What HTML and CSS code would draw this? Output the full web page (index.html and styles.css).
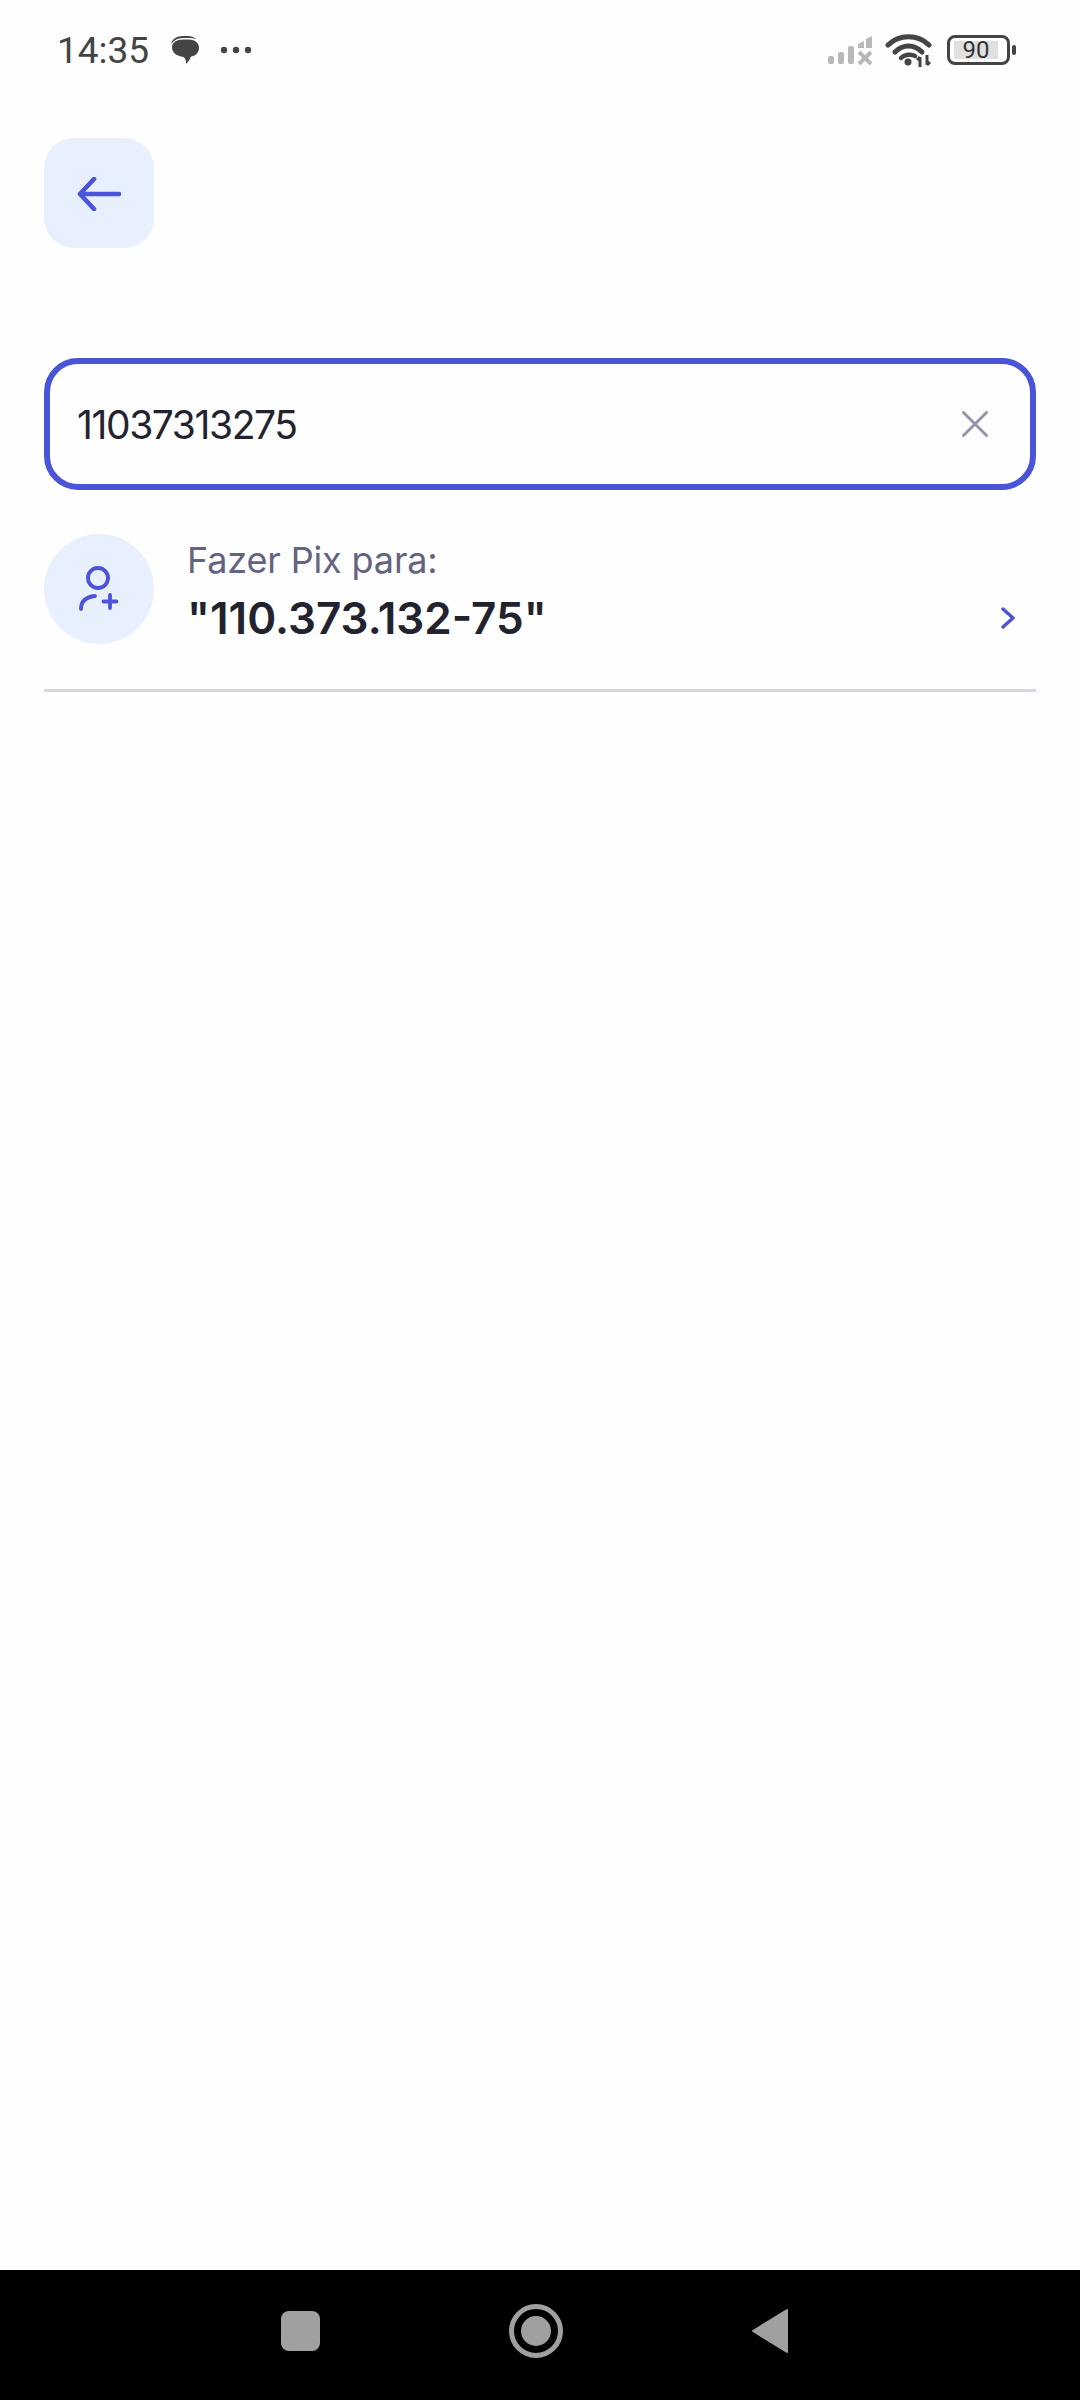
FILE: index.html
```html
<!DOCTYPE html>
<html lang="pt-BR">
<head>
  <meta charset="UTF-8" />
  <meta name="viewport" content="width=device-width, initial-scale=1" />
  <title>Fazer Pix</title>
  <link rel="stylesheet" href="styles.css">
</head>
<body>
  <header class="status-bar">
    <div class="status-left">
      <span class="clock">14:35</span>
      <svg class="chat-icon" width="30" height="30" viewBox="0 0 30 30">
        <path d="M1 9 C2 4 7 1 13 1 H18 C21 1 24 2 26 4 C24 3.500 21 3 18 3 H13 C8 3 4 5 1 9 Z" fill="#444"/>
        <path d="M2 12 C2 7.500 7 4.500 13 4.500 H19 C25 4.500 29 8 29 13 C29 18 25 21 21 21.500 C20 24 18.500 27 16 29 C16.300 26 15.500 23.500 13.500 22 C7 21 2 18 2 12 Z" fill="#444"/>
      </svg>
      <svg class="dots-icon" width="32" height="8" viewBox="0 0 32 8">
        <circle cx="4" cy="4" r="3.200" fill="#444"/>
        <circle cx="16" cy="4" r="3.200" fill="#444"/>
        <circle cx="28" cy="4" r="3.200" fill="#444"/>
      </svg>
    </div>
    <div class="status-right">
      <svg width="46" height="30" viewBox="0 0 46 30">
        <rect x="1" y="21" width="6" height="8" rx="2" fill="#b8b8b8"/>
        <rect x="11" y="17" width="6" height="12" rx="2" fill="#b8b8b8"/>
        <rect x="21" y="11" width="6" height="18" rx="2" fill="#b8b8b8"/>
        <path d="M31 9 L37 6 V13 H31 Z" fill="#b8b8b8"/>
        <path d="M39 4 L45 1 V13 H39 Z" fill="#b8b8b8"/>
        <path d="M32 17 L44 29 M44 17 L32 29" stroke="#b8b8b8" stroke-width="4"/>
      </svg>
      <svg class="wifi-icon" width="48" height="34" viewBox="0 0 48 34">
        <path d="M3 12 C14 1 33 1 44 12" fill="none" stroke="#444" stroke-width="5" stroke-linecap="round"/>
        <path d="M10 19 C18 11 29 11 37 19" fill="none" stroke="#444" stroke-width="5" stroke-linecap="round"/>
        <path d="M16 25 C20 21 27 21 30 23" fill="none" stroke="#444" stroke-width="4.500" stroke-linecap="round"/>
        <circle cx="23" cy="29" r="3.500" fill="#444"/>
        <path d="M35 34 V24 M35 24 L32 27 M42 22 V32 M42 32 L45 29" fill="none" stroke="#444" stroke-width="3"/>
      </svg>
      <div class="battery">
        <div class="battery-body">
          <span class="battery-level">90</span>
        </div>
        <div class="battery-cap"></div>
      </div>
    </div>
  </header>

  <main class="content">
    <button class="back-btn" type="button" aria-label="Voltar">
      <svg class="back-icon" width="44" height="34" viewBox="0 0 44 34">
        <path d="M42 17 H3 M17 2 L3 17 L17 32" fill="none" stroke="#4a54d8" stroke-width="4.600" stroke-linecap="round" stroke-linejoin="round"/>
      </svg>
    </button>

    <div class="search-box">
      <span class="search-value">11037313275</span>
      <svg class="clear-icon" width="26" height="26" viewBox="0 0 26 26">
        <path d="M1.500 1.500 L24.500 24.500 M24.500 1.500 L1.500 24.500" stroke="#9494aa" stroke-width="3" stroke-linecap="round"/>
      </svg>
    </div>

    <div class="result-row">
      <div class="avatar">
        <svg class="person-icon" width="44" height="48" viewBox="0 0 44 48">
          <circle cx="20" cy="13" r="10" fill="none" stroke="#4a54d8" stroke-width="3.800"/>
          <path d="M3 44 C3 36 8 32 17 31" fill="none" stroke="#4a54d8" stroke-width="3.800" stroke-linecap="round"/>
          <path d="M32 30 V43 M25.500 36.500 H38.500" fill="none" stroke="#4a54d8" stroke-width="3.800" stroke-linecap="round"/>
        </svg>
      </div>
      <div class="result-text">
        <div class="result-label">Fazer Pix para:</div>
        <div class="result-line">
          <span class="result-value">"110.373.132-75"</span>
          <svg class="chevron" width="14" height="22" viewBox="0 0 14 22">
            <path d="M2 2 L12 11 L2 20" fill="none" stroke="#4a54d8" stroke-width="3.400" stroke-linecap="round" stroke-linejoin="round"/>
          </svg>
        </div>
      </div>
    </div>
  </main>

  <footer class="nav-bar">
    <div class="nav-square"></div>
    <div class="nav-home"><div class="nav-home-dot"></div></div>
    <svg width="38" height="46" viewBox="0 0 38 46">
      <path d="M36 2 V44 L2 23 Z" fill="#a0a0a0" stroke="#a0a0a0" stroke-width="2" stroke-linejoin="round"/>
    </svg>
  </footer>
</body>
</html>
```

FILE: styles.css
```css
* {
  box-sizing: border-box;
}
body {
  margin: 0;
  width: 1080px;
  height: 2400px;
  display: flex;
  flex-direction: column;
  background: #fefefe;
  font-family: Inter, "Noto Sans", sans-serif;
}
.status-bar {
  height: 100px;
  padding: 0 64px 0 57px;
  display: flex;
  justify-content: space-between;
  align-items: center;
}
.status-left {
  display: flex;
  align-items: center;
}
.clock {
  font-family: Roboto, sans-serif;
  font-size: 37px;
  color: #444;
}
.chat-icon {
  margin-left: 21px;
}
.dots-icon {
  margin-left: 20px;
}
.status-right {
  display: flex;
  align-items: center;
}
.wifi-icon {
  margin-left: 12px;
}
.battery {
  margin-left: 14px;
  display: flex;
  align-items: center;
  gap: 2px;
}
.battery-body {
  width: 63px;
  height: 30px;
  padding: 3px 9px 3px 4px;
  border: 3px solid #444;
  border-radius: 8px;
  display: flex;
}
.battery-level {
  flex: 1;
  background: #e0e0e0;
  font-family: Roboto, sans-serif;
  font-size: 24px;
  line-height: 18px;
  text-align: center;
  color: #333;
}
.battery-cap {
  width: 4px;
  height: 10px;
  background: #444;
  border-radius: 2px;
}
.content {
  flex: 1;
  padding: 38px 44px 0;
}
.back-btn {
  width: 110px;
  height: 110px;
  padding: 0;
  border: none;
  border-radius: 30px;
  background: #e8f0fd;
  display: flex;
  align-items: center;
  justify-content: center;
}
.back-icon {
  margin-top: 1px;
}
.search-box {
  margin-top: 110px;
  height: 132px;
  padding: 0 42px 0 27px;
  border: 6px solid #4a54d8;
  border-radius: 34px;
  display: flex;
  align-items: center;
  justify-content: space-between;
}
.search-value {
  font-size: 39px;
  letter-spacing: -1.4px;
  color: #23232f;
}
.result-row {
  margin-top: 44px;
  padding-bottom: 39px;
  border-bottom: 3px solid #d5d5e0;
  display: flex;
  gap: 33px;
}
.avatar {
  width: 110px;
  height: 110px;
  flex-shrink: 0;
  border-radius: 50%;
  background: #e8f0fd;
  display: flex;
  align-items: center;
  justify-content: center;
}
.person-icon {
  margin-left: 2px;
}
.result-text {
  flex: 1;
}
.result-label {
  font-size: 36px;
  letter-spacing: -0.15px;
  line-height: 52px;
  color: #636382;
}
.result-line {
  height: 64px;
  padding-right: 21px;
  display: flex;
  align-items: center;
  justify-content: space-between;
}
.result-value {
  font-size: 44px;
  font-weight: 600;
  color: #23232f;
}
.nav-bar {
  height: 130px;
  background: #000;
  padding: 38px 291px 0 281px;
  display: flex;
  justify-content: space-between;
  align-items: flex-start;
}
.nav-square {
  width: 39px;
  height: 40px;
  margin-top: 3px;
  background: #a0a0a0;
  border-radius: 8px;
}
.nav-home {
  width: 54px;
  height: 54px;
  margin-top: -4px;
  border: 5px solid #a0a0a0;
  border-radius: 50%;
  display: flex;
  align-items: center;
  justify-content: center;
}
.nav-home-dot {
  width: 30px;
  height: 30px;
  background: #a0a0a0;
  border-radius: 50%;
}
```
